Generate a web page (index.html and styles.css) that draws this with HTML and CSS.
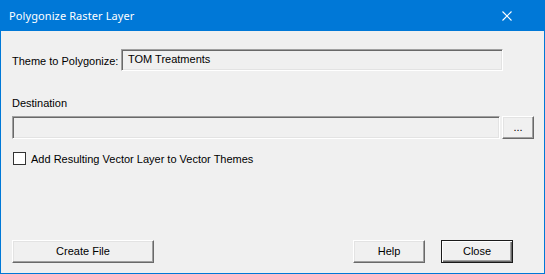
FILE: index.html
```html
<!DOCTYPE html>
<html>
<head>
<meta charset="utf-8">
<link rel="stylesheet" href="styles.css">
</head>
<body>
<div class="window">
  <div class="titlebar">
    <span class="title">Polygonize Raster Layer</span>
    <svg class="close-x" width="10" height="10" viewBox="0 0 10 10"><path d="M0.5 0.5 L9.5 9.5 M9.5 0.5 L0.5 9.5" stroke="#fff" stroke-width="1.1" fill="none"/></svg>
  </div>
  <div class="client">
    <div class="row theme-row">
      <span class="label theme-label">Theme to Polygonize:</span>
      <div class="textbox theme-box">TOM Treatments</div>
    </div>
    <div class="label dest-label">Destination</div>
    <div class="row dest-row">
      <div class="textbox dest-box"></div>
      <div class="button browse">...</div>
    </div>
    <div class="row check-row">
      <span class="checkbox"></span>
      <span class="label">Add Resulting Vector Layer to Vector Themes</span>
    </div>
    <div class="footer">
      <div class="button create">Create File</div>
      <div class="spacer"></div>
      <div class="button help">Help</div>
      <div class="button close default">Close</div>
    </div>
  </div>
</div>
</body>
</html>
```
FILE: styles.css
```css
html, body {
  margin: 0;
  padding: 0;
  background: #f0f0f0;
}
.window {
  width: 545px;
  height: 274px;
  box-sizing: border-box;
  display: flex;
  flex-direction: column;
  font-family: "Liberation Sans", Arial, sans-serif;
  font-size: 11px;
  color: #000;
}
.titlebar {
  height: 31px;
  background: #0078d7;
  display: flex;
  align-items: center;
  padding-left: 9px;
  padding-right: 33px;
  flex: none;
}
.title {
  color: #fff;
  font-family: "Noto Sans", "Open Sans", sans-serif;
  font-size: 11px;
  letter-spacing: 0.1px;
  flex: 1;
  margin-top: -1px;
}
.close-x {
  display: block;
}
.client {
  flex: 1;
  border: 1px solid #0078d7;
  border-top: none;
  padding: 0 9px 10px 11px;
  display: flex;
  flex-direction: column;
}
.row {
  display: flex;
  align-items: center;
}
.theme-row {
  margin-top: 18px;
  height: 22px;
}
.theme-label {
  width: 109px;
  flex: none;
  padding-top: 2px;
}
.textbox {
  box-sizing: border-box;
  background: #f0f0f0;
  border-top: 1px solid #a0a0a0;
  border-left: 1px solid #a0a0a0;
  border-bottom: 1px solid #ffffff;
  border-right: 1px solid #ffffff;
  box-shadow: inset 1px 1px 0 #696969, inset -1px -1px 0 #e3e3e3;
}
.theme-box {
  width: 382px;
  height: 22px;
  padding: 2px 0 0 6px;
  line-height: 15px;
}
.dest-label {
  margin-top: 26px;
  height: 13px;
  line-height: 13px;
}
.dest-row {
  margin-top: 6px;
  height: 23px;
  gap: 2px;
}
.dest-box {
  width: 488px;
  height: 23px;
}
.button {
  box-sizing: border-box;
  height: 23px;
  background: #f0f0f0;
  border-top: 1px solid #ffffff;
  border-left: 1px solid #ffffff;
  border-bottom: 1px solid #696969;
  border-right: 1px solid #696969;
  box-shadow: inset -1px -1px 0 #a0a0a0, inset 1px 1px 0 #e3e3e3;
  display: flex;
  align-items: center;
  justify-content: center;
  line-height: 13px;
}
.browse {
  width: 32px;
  padding-bottom: 1px;
}
.check-row {
  margin-top: 13px;
  height: 13px;
}
.checkbox {
  box-sizing: border-box;
  width: 13px;
  height: 13px;
  border: 1px solid #333333;
  background: #ffffff;
  margin-left: 1px;
  margin-right: 5px;
  flex: none;
}
.footer {
  margin-top: auto;
  display: flex;
  align-items: center;
  padding-right: 22px;
}
.create {
  width: 142px;
}
.spacer {
  flex: 1;
}
.help {
  width: 72px;
  margin-right: 16px;
}
.close {
  width: 72px;
}
.default {
  border: 1px solid #1a1a1a;
  box-shadow: inset 1px 1px 0 #ffffff, inset -1px -1px 0 #696969, inset -2px -2px 0 #a0a0a0;
}
```
